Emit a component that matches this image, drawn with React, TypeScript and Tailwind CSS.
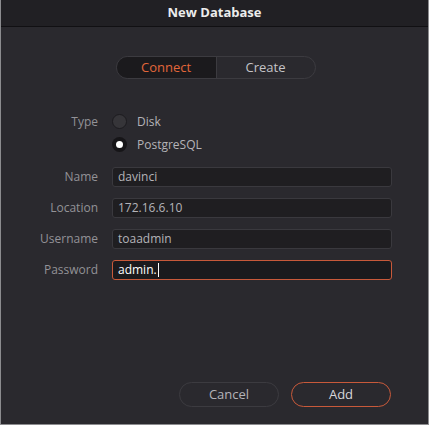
import { useState } from 'react';

const font = { fontFamily: '"Open Sans", "Noto Sans", sans-serif' };

function Field({ label, value, active }: { label: string; value: string; active?: boolean }) {
  return (
    <div className="flex items-center h-[20px]">
      <div className="w-[98px] text-right pr-[1px] text-[12px] text-[#939297]">{label}</div>
      <div
        className={
          'ml-[13px] w-[280px] h-[20px] rounded-[3px] flex items-center px-[5px] text-[12px] ' +
          (active
            ? 'border border-[#c8593a] bg-[#1b1a1d] text-white'
            : 'border border-[#3a393e] bg-[#1f1e21] text-[#b4b3b8]')
        }
      >
        {value}
        {active && <span className="ml-[1px] w-px h-[14px] bg-white" />}
      </div>
    </div>
  );
}

export default function App() {
  const [tab, setTab] = useState<'connect' | 'create'>('connect');

  return (
    <div
      style={font}
      className="w-[429px] h-[425px] flex flex-col bg-[#2a292e] border-x border-b border-[#8c8c8f] select-none"
    >
      <div className="h-[27px] shrink-0 bg-[#212024] border-b border-[#111013] flex items-center justify-center">
        <span className="text-[13px] font-bold text-[#ececec]">New Database</span>
      </div>

      <div className="flex justify-center mt-[29px] pl-[2px]">
        <div className="flex w-[200px] h-[23px] rounded-full border border-[#3c3b40] overflow-hidden text-[13px]">
          <button
            onClick={() => setTab('connect')}
            className={
              'w-1/2 ' +
              (tab === 'connect' ? 'bg-[#1b1a1d] text-[#e2663a]' : 'text-[#c4c3c7]')
            }
          >
            Connect
          </button>
          <div className="w-px bg-[#3c3b40]" />
          <button
            onClick={() => setTab('create')}
            className={
              'flex-1 ' +
              (tab === 'create' ? 'bg-[#1b1a1d] text-[#e2663a]' : 'text-[#c4c3c7]')
            }
          >
            Create
          </button>
        </div>
      </div>

      <div className="mt-[35px] flex flex-col gap-[8px]">
        <div className="flex items-center h-[15px]">
          <div className="w-[98px] text-right pr-[1px] text-[12px] text-[#939297]">Type</div>
          <div className="ml-[13px] w-[15px] h-[15px] rounded-full bg-[#363539] border-[1.5px] border-[#1c1b1f]" />
          <span className="ml-[10px] text-[12px] text-[#b4b3b8]">Disk</span>
        </div>
        <div className="flex items-center h-[15px]">
          <div className="w-[98px]" />
          <div className="ml-[13px] w-[15px] h-[15px] rounded-full bg-[#161518] flex items-center justify-center">
            <div className="w-[7px] h-[7px] rounded-full bg-white" />
          </div>
          <span className="ml-[10px] text-[12px] text-[#b4b3b8]">PostgreSQL</span>
        </div>
      </div>

      <div className="mt-[15px] flex flex-col gap-[11px]">
        <Field label="Name" value="davinci" />
        <Field label="Location" value="172.16.6.10" />
        <Field label="Username" value="toaadmin" />
        <Field label="Password" value="admin." active />
      </div>

      <div className="mt-auto mb-[17px] flex justify-end gap-[12px] pr-[37px]">
        <button className="w-[100px] h-[25px] rounded-full border border-[#3c3b40] text-[13px] text-[#b4b3b8]">
          Cancel
        </button>
        <button className="w-[100px] h-[25px] rounded-full border border-[#c8593a] text-[13px] text-[#d8d7db]">
          Add
        </button>
      </div>
    </div>
  );
}
